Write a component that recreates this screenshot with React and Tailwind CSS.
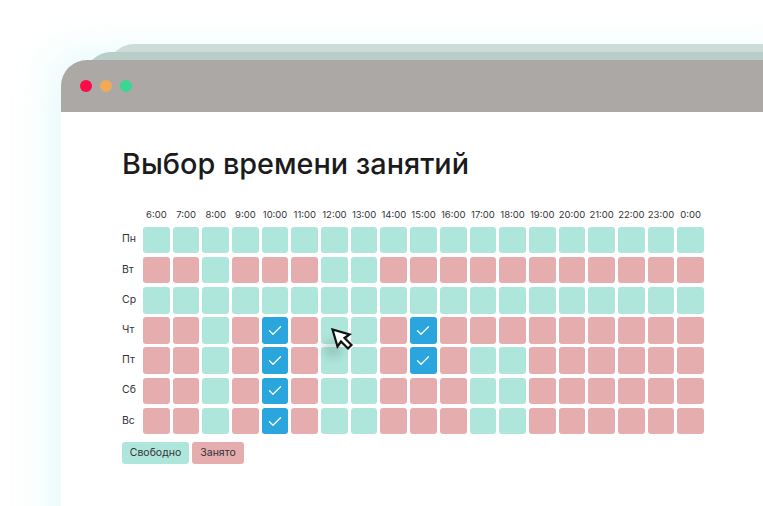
import React from "react";

const hours = ["6:00","7:00","8:00","9:00","10:00","11:00","12:00","13:00","14:00","15:00","16:00","17:00","18:00","19:00","20:00","21:00","22:00","23:00","0:00"];
const rows = [
  ["Пн", "ttttttttttttttttttt"],
  ["Вт", "rrtrrrttrrrrrrrrrrr"],
  ["Ср", "ttttttttttttttttttt"],
  ["Чт", "rrtrbrttrbrrrrrrrrr"],
  ["Пт", "rrtrbrttrbrttrrrrrr"],
  ["Сб", "rrtrbrttrrrttrrrrrr"],
  ["Вс", "rrtrbrttrrrttrrrrrr"],
];

function Cell({ kind }) {
  if (kind === "t") return <div className="h-[26.5px] rounded-[3px] bg-[#afe6dc]" />;
  if (kind === "r") return <div className="h-[26.5px] rounded-[3px] bg-[#e6adae]" />;
  return (
    <div className="flex h-[26.5px] items-center justify-center rounded-[3px] bg-[#2aa5de]">
      <svg width="14" height="11" viewBox="0 0 14 11" fill="none" stroke="white" strokeWidth="1.3" strokeLinecap="round" strokeLinejoin="round">
        <path d="M1.5 5.8 L5 9.2 L12.5 1.8" />
      </svg>
    </div>
  );
}

function Cursor() {
  return (
    <svg className="absolute left-[270px] top-[216px]" width="24" height="24" viewBox="0 0 24 24">
      <path d="M1.5 1.5 L6.5 18.5 L10 13.5 L17 20.5 L20.5 17 L13.5 10 L18.5 6.5 Z" fill="white" stroke="#111" strokeWidth="2.2" strokeLinejoin="miter" />
    </svg>
  );
}

export default function App() {
  return (
    <div className="h-[506px] w-[763px] overflow-hidden bg-white pl-[61px] pt-[60px] font-['Inter',sans-serif]">
      <div className="relative h-[520px] w-[760px] rounded-tl-[26px] rounded-tr-[26px] bg-white shadow-[-8px_-6px_42px_rgba(190,240,244,0.42)]">
        <div className="absolute -top-4 left-[47px] h-10 w-[740px] rounded-tl-[26px] bg-[#cbdcd9]" />
        <div className="absolute -top-2 left-[24px] h-10 w-[760px] rounded-tl-[26px] bg-[#b9cdc9]" />
        <div className="relative flex h-[52px] items-center gap-[8px] rounded-tl-[26px] rounded-tr-[26px] bg-[#aba8a6] pb-[1px] pl-[19px]">
          <span className="h-[12px] w-[12px] rounded-full bg-[#fb0b47]" />
          <span className="h-[12px] w-[12px] rounded-full bg-[#efab57]" />
          <span className="h-[12px] w-[12px] rounded-full bg-[#3ad694]" />
        </div>
        <div className="relative pl-[61px] pt-[34px]">
          <h1 className="h-9 text-[28.8px] font-medium leading-9 text-[#1b1b1d]">Выбор времени занятий</h1>
          <div className="mt-[25px] grid w-[582px] grid-cols-[18px_repeat(19,minmax(0,1fr))] gap-x-[3px] gap-y-[3.7px] text-[#333336]">
            <div className="h-4" />
            {hours.map((h) => (
              <div key={h} className="h-4 whitespace-nowrap text-center text-[9.5px] leading-4">{h}</div>
            ))}
            {rows.map(([day, cells]) => (
              <React.Fragment key={day}>
                <div className="flex h-[26.5px] items-center pb-[1px] text-[10.5px] leading-4">{day}</div>
                {cells.split("").map((c, i) => <Cell key={i} kind={c} />)}
              </React.Fragment>
            ))}
          </div>
          <div className="mt-[7.5px] flex gap-[3px] text-[10.5px] text-[#333336]">
            <div className="flex h-[22px] w-[67px] items-center justify-center rounded-[3px] bg-[#afe6dc]">Свободно</div>
            <div className="flex h-[22px] w-[52px] items-center justify-center rounded-[3px] bg-[#e6adae]">Занято</div>
          </div>
          <div className="absolute left-[262px] top-[228px] h-[18px] w-[20px] rotate-[30deg] rounded-full bg-[#6f9f95]/40 blur-[5px]" />
          <Cursor />
        </div>
      </div>
    </div>
  );
}
